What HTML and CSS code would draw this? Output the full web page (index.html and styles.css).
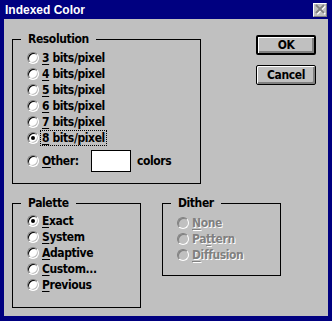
FILE: index.html
```html
<!DOCTYPE html>
<html lang="en">
<head>
    <meta charset="UTF-8">
    <title>Indexed Color</title>
    <link rel="stylesheet" href="styles.css">
</head>
<body>
    <div class="window">
        <!-- Title bar -->
        <div class="titlebar">
            <span class="title">Indexed Color</span>
            <span class="close">
                <svg width="12" height="11" viewBox="0 0 12 11">
                    <path d="M2 1 L10 9 M10 1 L2 9" stroke="#fff" stroke-width="2" transform="translate(1 1)"/>
                    <path d="M2 1 L10 9 M10 1 L2 9" stroke="#808080" stroke-width="2"/>
                </svg>
            </span>
        </div>

        <div class="client">
            <div class="top-row">
                <fieldset class="group resolution">
                    <legend>Resolution</legend>
                    <div class="option"><span class="radio"></span><span class="label"><u>3</u> bits/pixel</span></div>
                    <div class="option"><span class="radio"></span><span class="label"><u>4</u> bits/pixel</span></div>
                    <div class="option"><span class="radio"></span><span class="label"><u>5</u> bits/pixel</span></div>
                    <div class="option"><span class="radio"></span><span class="label"><u>6</u> bits/pixel</span></div>
                    <div class="option"><span class="radio"></span><span class="label"><u>7</u> bits/pixel</span></div>
                    <div class="option"><span class="radio checked"></span><span class="label focus"><u>8</u> bits/pixel</span></div>
                    <div class="option other">
                        <span class="radio"></span>
                        <span class="label other-label"><u>O</u>ther:</span>
                        <span class="textbox"></span>
                        <span class="label">colors</span>
                    </div>
                </fieldset>

                <div class="buttons">
                    <div class="button default">OK</div>
                    <div class="button">Cancel</div>
                </div>
            </div>

            <div class="bottom-row">
                <fieldset class="group palette">
                    <legend>Palette</legend>
                    <div class="option"><span class="radio checked"></span><span class="label"><u>E</u>xact</span></div>
                    <div class="option"><span class="radio"></span><span class="label"><u>S</u>ystem</span></div>
                    <div class="option"><span class="radio"></span><span class="label"><u>A</u>daptive</span></div>
                    <div class="option"><span class="radio"></span><span class="label"><u>C</u>ustom...</span></div>
                    <div class="option"><span class="radio"></span><span class="label"><u>P</u>revious</span></div>
                </fieldset>

                <fieldset class="group dither">
                    <legend>Dither</legend>
                    <div class="option disabled"><span class="radio"></span><span class="label"><u>N</u>one</span></div>
                    <div class="option disabled"><span class="radio"></span><span class="label">Pa<u>t</u>tern</span></div>
                    <div class="option disabled"><span class="radio"></span><span class="label"><u>D</u>iffusion</span></div>
                </fieldset>
            </div>
        </div>
    </div>
</body>
</html>
```

FILE: styles.css
```css
body {
    margin: 0;
    font-family: "DejaVu Sans Condensed", "Liberation Sans", sans-serif;
    font-weight: bold;
    font-size: 12px;
    letter-spacing: -0.4px;
    color: #000;
}
.window {
    width: 332px;
    height: 321px;
    box-sizing: border-box;
    background: #000080;
    padding: 0 4px 5px 4px;
    display: flex;
    flex-direction: column;
}
.titlebar {
    height: 19px;
    display: flex;
    align-items: center;
    justify-content: space-between;
    padding-left: 1px;
}
.title {
    color: #fff;
    font-family: "Liberation Sans", Arial, sans-serif;
    font-size: 12px;
    font-weight: bold;
    letter-spacing: 0;
}
.close {
    width: 14px;
    height: 14px;
    box-sizing: border-box;
    background: #c0c0c0;
    border: 1px solid;
    border-color: #fff #808080 #808080 #fff;
    display: flex;
    align-items: center;
    justify-content: center;
    margin-right: 1px;
}
.client {
    flex: 1;
    background: #c0c0c0;
    padding: 13px 12px 0 8px;
}
.top-row {
    display: flex;
    justify-content: space-between;
    align-items: flex-start;
}
.bottom-row {
    display: flex;
    gap: 21px;
    align-items: flex-start;
    margin-top: 12px;
}
.group {
    margin: 0;
    border: 1px solid #000;
    padding: 4px 0 11px 14px;
    box-sizing: border-box;
}
.group legend {
    margin-left: -6px;
    padding: 0 7px;
    line-height: 14px;
    height: 14px;
}
.resolution {
    width: 189px;
}
.palette {
    width: 129px;
    padding-top: 3px;
    padding-bottom: 14px;
}
.dither {
    width: 119px;
    padding-top: 5px;
    padding-bottom: 12px;
}
.option {
    display: flex;
    align-items: center;
    height: 16px;
}
.option.other {
    height: 22px;
    margin-top: 4px;
}
.label {
    margin-left: 1px;
    line-height: 14px;
    padding: 0 1px;
    border: 1px solid transparent;
}
.label u {
    text-underline-offset: 2px;
}
.focus {
    border: 1px dotted #000;
}
.other-label {
    width: 47px;
}
.textbox {
    width: 40px;
    height: 22px;
    box-sizing: border-box;
    background: #fff;
    border: 1px solid #000;
    margin-right: 3px;
}
.radio {
    position: relative;
    width: 12px;
    height: 12px;
    box-sizing: border-box;
    border-radius: 50%;
    background: #fff;
    border: 1px solid;
    border-color: #808080 #fff #fff #808080;
    box-shadow: inset 1px 1px 0 #000, inset -1px -1px 0 #c0c0c0;
    flex: none;
}
.radio.checked::after {
    content: "";
    position: absolute;
    left: 3px;
    top: 3px;
    width: 4px;
    height: 4px;
    border-radius: 50%;
    background: #000;
}
.disabled .radio {
    background: #c0c0c0;
    box-shadow: inset 1px 1px 0 #808080;
}
.disabled .label {
    color: #808080;
    text-shadow: 1px 1px 0 #fff;
}
.buttons {
    display: flex;
    flex-direction: column;
    gap: 10px;
    margin-top: 3px;
}
.button {
    width: 60px;
    height: 20px;
    box-sizing: border-box;
    border: 1px solid #000;
    border-radius: 2px;
    background: #c0c0c0;
    box-shadow: inset 1px 1px 0 #fff, inset -2px -2px 0 #808080;
    display: flex;
    align-items: center;
    justify-content: center;
}
.button.default {
    border-width: 2px;
}
```
